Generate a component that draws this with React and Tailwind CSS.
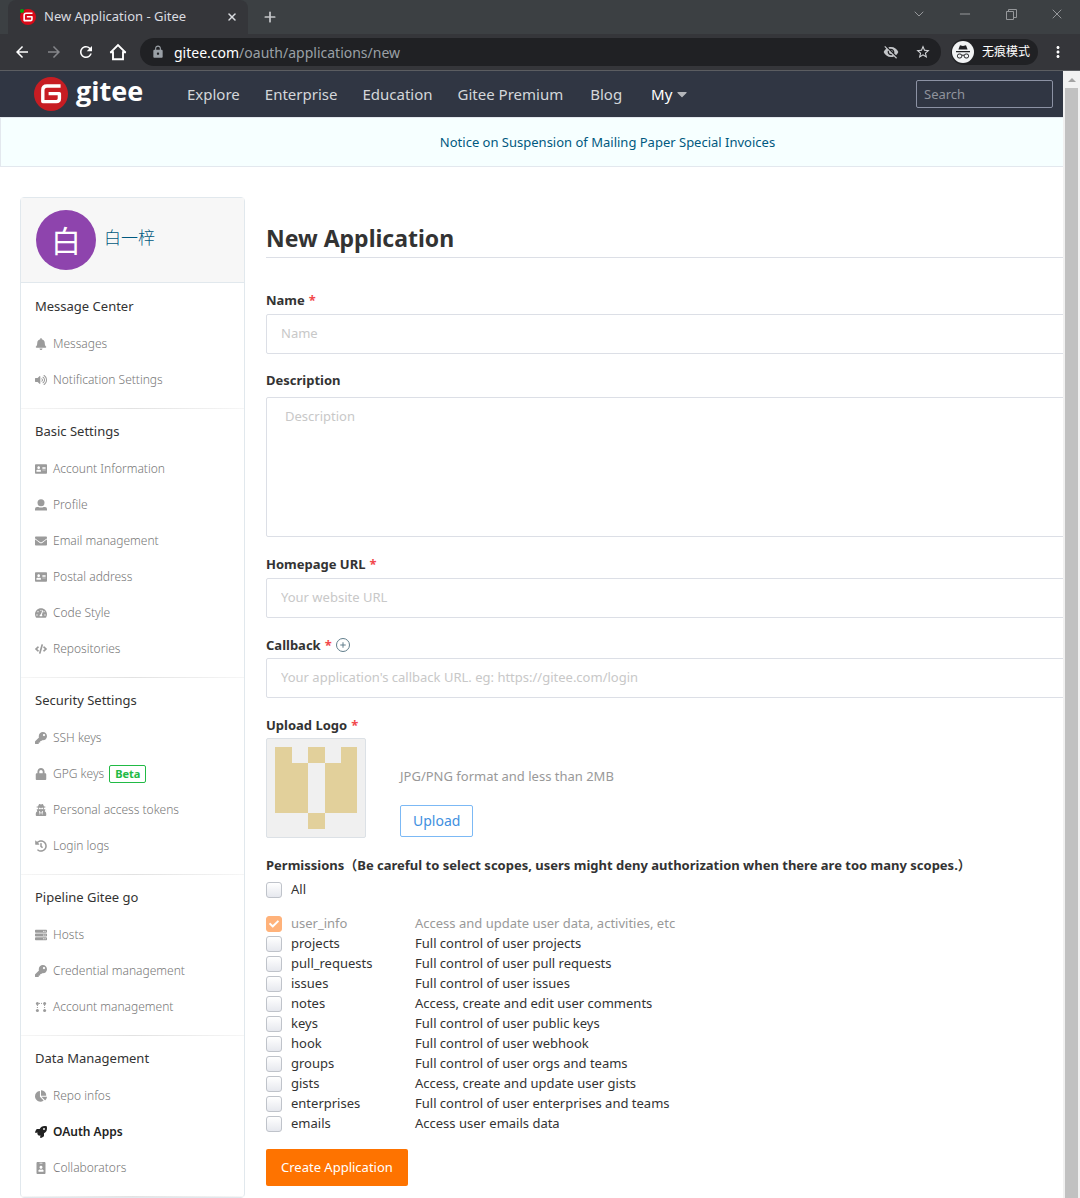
import React from "react";
import {
  FaBell, FaVolumeUp, FaAddressCard, FaUser, FaEnvelope, FaTachometerAlt, FaCode, FaKey, FaLock,
  FaUserSecret, FaHistory, FaServer, FaChartPie, FaRocket, FaIdBadge, FaCheck, FaCaretDown,
} from "react-icons/fa";
import { MdArrowBack, MdArrowForward, MdRefresh, MdLock, MdVisibilityOff, MdStarBorder, MdMoreVert } from "react-icons/md";
import { ChevronDown, Minus, X, Plus } from "lucide-react";

function GiteeMark({ className, color = "#c71d23" }) {
  return (
    <svg className={className} viewBox="0 0 34 34" aria-hidden="true">
      <circle cx="17" cy="17" r="17" fill={color} />
      <path
        d="M26.6 9H13Q8.8 9 8.8 13.2V24.6H22.4Q25.4 24.6 25.4 21.6V16.6H14.6"
        fill="none" stroke="#fff" strokeWidth="3.4" strokeLinejoin="round"
      />
    </svg>
  );
}

function HomeIcon({ className }) {
  return (
    <svg className={className} viewBox="0 0 18 18" fill="none" stroke="currentColor" strokeWidth="1.9" aria-hidden="true">
      <path d="M1.4 9.6 9 2l7.6 7.6M1 9.2h3v7h10v-7h3" />
    </svg>
  );
}

function IncognitoIcon({ className }) {
  return (
    <svg className={className} viewBox="0 0 22 22" fill="#202124" aria-hidden="true">
      <circle cx="11" cy="11" r="11" fill="#f1f3f4" />
      <path d="M8 4.2 11 5l3-.8 1.6 4.4H6.4zM4 10h14v1.2H4z" />
      <path d="M10 14.4q1-.8 2 0" fill="none" stroke="#202124" />
      <rect x="5.4" y="13" width="4.4" height="4" rx="1.8" fill="none" stroke="#202124" />
      <rect x="12.2" y="13" width="4.4" height="4" rx="1.8" fill="none" stroke="#202124" />
    </svg>
  );
}

function RestoreIcon({ className }) {
  return (
    <svg className={className} viewBox="0 0 11 11" fill="none" stroke="currentColor" aria-hidden="true">
      <path d="M.5 2.5h7v8h-7zM2.5 2.5v-2h8v8h-3" />
    </svg>
  );
}

function NodesIcon({ className }) {
  return (
    <svg className={className} viewBox="0 0 12 12" fill="currentColor" aria-hidden="true">
      <circle cx="2.4" cy="2.4" r="1.5" />
      <circle cx="9.6" cy="2.4" r="1.5" />
      <circle cx="2.4" cy="9.6" r="1.5" />
      <circle cx="9.6" cy="9.6" r="1.5" />
      <path d="M2.4 4v4M9.6 4v4M4 2.4h4" stroke="currentColor" strokeDasharray="1 1" />
    </svg>
  );
}

function PersonIcon({ className }) {
  return (
    <svg className={className} viewBox="0 0 12 12" fill="currentColor" aria-hidden="true">
      <circle cx="6" cy="3.8" r="3.5" />
      <path d="M0 11.6V10q0-2 2-2h1.2Q6 9 8.8 8H10q2 0 2 2v1.6z" />
    </svg>
  );
}

const navLinks = ["Explore", "Enterprise", "Education", "Gitee Premium"];

const windowControls = [
  { label: "Search tabs", icon: <ChevronDown className="size-4" strokeWidth={1.5} /> },
  { label: "Minimize", icon: <Minus className="size-4" strokeWidth={1.5} /> },
  { label: "Restore", icon: <RestoreIcon className="size-[11px]" /> },
  { label: "Close window", icon: <X className="size-4" strokeWidth={1.5} /> },
];

const sections = [
  { title: "Message Center", items: [
    { label: "Messages", Icon: FaBell },
    { label: "Notification Settings", Icon: FaVolumeUp },
  ] },
  { title: "Basic Settings", items: [
    { label: "Account Information", Icon: FaAddressCard },
    { label: "Profile", Icon: PersonIcon },
    { label: "Email management", Icon: FaEnvelope },
    { label: "Postal address", Icon: FaAddressCard },
    { label: "Code Style", Icon: FaTachometerAlt },
    { label: "Repositories", Icon: FaCode },
  ] },
  { title: "Security Settings", items: [
    { label: "SSH keys", Icon: FaKey },
    { label: "GPG keys", Icon: FaLock, beta: true },
    { label: "Personal access tokens", Icon: FaUserSecret },
    { label: "Login logs", Icon: FaHistory },
  ] },
  { title: "Pipeline Gitee go", items: [
    { label: "Hosts", Icon: FaServer },
    { label: "Credential management", Icon: FaKey },
    { label: "Account management", Icon: NodesIcon },
  ] },
  { title: "Data Management", items: [
    { label: "Repo infos", Icon: FaChartPie },
    { label: "OAuth Apps", Icon: FaRocket, active: true },
    { label: "Collaborators", Icon: FaIdBadge },
  ] },
];

const scopes = [
  ["user_info", "Access and update user data, activities, etc"],
  ["projects", "Full control of user projects"],
  ["pull_requests", "Full control of user pull requests"],
  ["issues", "Full control of user issues"],
  ["notes", "Access, create and edit user comments"],
  ["keys", "Full control of user public keys"],
  ["hook", "Full control of user webhook"],
  ["groups", "Full control of user orgs and teams"],
  ["gists", "Access, create and update user gists"],
  ["enterprises", "Full control of user enterprises and teams"],
  ["emails", "Access user emails data"],
];

function BrowserChrome() {
  return (
    <div className="shrink-0 bg-[#3c4043]">
      <div className="flex h-[34px] items-end justify-between">
        <div className="flex items-center pl-2">
          <div className="flex h-[34px] w-60 items-center rounded-t-lg bg-[#35363a] pr-2.5 pl-3">
            <span className="relative mr-2 flex">
              <GiteeMark className="size-4" color="#d80a18" />
              <span className="absolute top-0 left-0 size-1 rounded-full bg-[#0aa00a]" />
            </span>
            <span className="flex-1 text-[13px] text-[#dadce0]">New Application - Gitee</span>
            <button aria-label="Close tab" className="text-[#dadce0]"><X className="size-3" strokeWidth={3} /></button>
          </div>
          <button aria-label="New tab" className="ml-3.5 text-[#c4c6c9]"><Plus className="size-4" strokeWidth={2.6} /></button>
        </div>
        <div className="flex self-start text-[#96989b]">
          {windowControls.map(({ label, icon }) => (
            <button key={label} aria-label={label} className="flex h-7 w-[46px] items-center justify-center">{icon}</button>
          ))}
        </div>
      </div>
      <div className="flex h-[37px] items-center border-b border-[#5b5d61] bg-[#35363a] pl-[13px] text-white">
        <button aria-label="Back" className="mr-3.5"><MdArrowBack className="size-[18px]" /></button>
        <button aria-label="Forward" className="mr-3.5 text-[#85868a]"><MdArrowForward className="size-[18px]" /></button>
        <button aria-label="Reload" className="mr-3.5"><MdRefresh className="size-[18px]" /></button>
        <button aria-label="Home" className="mr-[13px]"><HomeIcon className="size-[18px]" /></button>
        <div className="flex h-7 flex-1 items-center rounded-full bg-[#202124] pr-2.5 pl-[11px]">
          <MdLock className="mr-[9px] size-3.5 text-[#9aa0a6]" />
          <p className="flex-1 text-[14px] text-[#9aa0a6]"><span className="text-white">gitee.com</span>/oauth/applications/new</p>
          <button aria-label="Third-party cookies blocked" className="mr-4 text-[#c4c6c9]"><MdVisibilityOff className="size-4" /></button>
          <button aria-label="Bookmark" className="text-[#d5d7da]"><MdStarBorder className="size-4" /></button>
        </div>
        <div className="mr-[11px] ml-2.5 flex h-[26px] items-center gap-2 rounded-full bg-[#202124] pr-2 pl-px">
          <IncognitoIcon className="size-[22px]" />
          <span className="text-[12px]">无痕模式</span>
        </div>
        <button aria-label="Menu" className="mr-[13px]"><MdMoreVert className="size-[18px]" /></button>
      </div>
    </div>
  );
}

function SiteHeader() {
  return (
    <header className="flex h-[46px] items-center bg-[#303643] pr-2.5 pl-[34px] text-[15px] text-[#d4d6da]">
      <a href="#" aria-label="Gitee" className="flex w-[153px] items-center gap-2">
        <GiteeMark className="size-[34px]" />
        <span className="pb-1.5 font-['Open_Sans',sans-serif] text-[27px] leading-8 font-bold text-white">gitee</span>
      </a>
      <nav className="flex flex-1 items-center gap-[25px]">
        {navLinks.map((label) => <a key={label} href="#">{label}</a>)}
        <a href="#" className="ml-0.5">Blog</a>
        <button className="ml-1 flex items-center gap-0.5 text-white">My<FaCaretDown className="h-4 w-auto text-[#b4b6ba]" /></button>
      </nav>
      <input
        aria-label="Search" placeholder="Search"
        className="h-7 w-[137px] rounded-xs border border-[#8c92a4] bg-transparent px-[7px] text-[13px] placeholder:text-[#8f939c]"
      />
    </header>
  );
}

function Sidebar() {
  return (
    <aside className="w-[225px] shrink-0 rounded-sm border border-[#e1e8ed]">
      <div className="mb-px flex h-[85px] items-center border-b border-[#e1e8ed] bg-[#f7f7f7] pl-[15px]">
        <span className="flex size-[60px] items-center justify-center rounded-full bg-[#8e44ad] text-[30px] text-white">白</span>
        <a href="#" className="ml-2 pb-1 text-[17px] font-light text-[#005980]">白一梓</a>
      </div>
      {sections.map(({ title, items }) => (
        <section key={title}>
          <h2 className="flex h-[42px] items-center pt-1 pl-3.5 text-[13px] text-[#333]">{title}</h2>
          <ul className="pb-2.5">
            {items.map(({ label, Icon, beta, active }) => (
              <li key={label}>
                <a href="#" className={active
                  ? "flex h-9 items-center pl-3 text-[12px] font-semibold text-[#222]"
                  : "flex h-9 items-center pl-3 text-[12px] font-light text-[#777]"}>
                  <span className={active ? "mr-[5px] flex w-[15px] justify-center" : "mr-[5px] flex w-[15px] justify-center text-[#9b9b9b]"}>
                    <Icon className="h-3 w-auto shrink-0" />
                  </span>
                  {label}
                  {beta && <span className="ml-[5px] rounded-xs border border-[#21ba45] px-[5px] text-[11px] leading-4 font-bold text-[#21ba45]">Beta</span>}
                </a>
              </li>
            ))}
          </ul>
          <div className="h-px bg-linear-to-r from-[#f6f6f6] via-[#e2e2e2] to-[#f6f6f6]" />
        </section>
      ))}
    </aside>
  );
}

function FieldLabel({ htmlFor, required, children }) {
  return (
    <label htmlFor={htmlFor} className="text-[13px] leading-5 font-bold">
      {children}{required && <span className="ml-1 text-[#f2494c]">*</span>}
    </label>
  );
}

function TickBox({ id, checked }) {
  return (
    <span className="relative flex size-4 shrink-0">
      <input
        id={id} type="checkbox" defaultChecked={checked} disabled={checked}
        className="size-4 appearance-none rounded-[3px] border border-[#bfc3ca] bg-linear-to-b from-white to-[#e6e8ee] checked:border-[#ffb27a] checked:bg-[#ffb27a] checked:bg-none"
      />
      {checked && <FaCheck className="pointer-events-none absolute top-[3px] left-[3px] size-2.5 text-white" />}
    </span>
  );
}

const inputClass = "mt-[3px] block h-10 w-full rounded-xs border border-[#dcdfe6] px-3.5 pb-0.5 text-[13px] placeholder:text-[#c8c8c8]";

function ApplicationForm() {
  return (
    <form className="min-w-0 flex-1 pt-[26px] text-[13px] text-[#333]" onSubmit={(e) => e.preventDefault()}>
      <h1 className="mb-8 border-b border-[#dcdfe6] pb-1 text-[23px] leading-[30px] font-bold">New Application</h1>

      <div className="mb-4">
        <FieldLabel htmlFor="name" required>Name</FieldLabel>
        <input id="name" placeholder="Name" className={inputClass} />
      </div>
      <div className="mb-[17px]">
        <FieldLabel htmlFor="description">Description</FieldLabel>
        <textarea id="description" placeholder="Description" className="mt-[7px] block h-[140px] w-full resize-none rounded-xs border border-[#dcdfe6] px-[18px] py-2 text-[13px] leading-5 placeholder:text-[#c8c8c8]" />
      </div>
      <div className="mb-[17px]">
        <FieldLabel htmlFor="homepage" required>Homepage URL</FieldLabel>
        <input id="homepage" placeholder="Your website URL" className={inputClass} />
      </div>
      <div className="mb-[17px]">
        <div className="flex items-center">
          <FieldLabel htmlFor="callback" required>Callback</FieldLabel>
          <button type="button" aria-label="Add callback" className="ml-1 flex size-3.5 items-center justify-center rounded-full border border-[#607d8b] text-[#607d8b]">
            <Plus className="size-2" strokeWidth={3} />
          </button>
        </div>
        <input id="callback" placeholder="Your application's callback URL. eg: https://gitee.com/login" className={inputClass} />
      </div>

      <div className="mb-[17px]">
        <FieldLabel htmlFor="upload" required>Upload Logo</FieldLabel>
        <div className="mt-[3px] flex">
          <svg className="size-[100px] rounded-xs border border-[#dce1e6] bg-[#f0f0f0]" viewBox="0 0 98 98" fill="#e2d09b" role="img" aria-label="Application logo">
            <path d="M8 8h17v16h16v50H8zM41 8h17v16H41zM90 8H74v16H58v50h32zM41 74h17v16H41z" />
          </svg>
          <div className="ml-[34px] pt-7">
            <p className="leading-5 text-[#999]">JPG/PNG format and less than 2MB</p>
            <button id="upload" type="button" className="mt-[19px] h-8 rounded-xs border border-[#7cb9f5] px-3 pb-0.5 text-[14px] text-[#4190e0]">Upload</button>
          </div>
        </div>
      </div>

      <fieldset>
        <legend className="leading-5 font-bold whitespace-nowrap">Permissions（Be careful to select scopes, users might deny authorization when there are too many scopes.）</legend>
        <label htmlFor="scope-all" className="mt-[5px] mb-3.5 flex h-5 items-center gap-[9px]"><TickBox id="scope-all" />All</label>
        {scopes.map(([name, text], i) => (
          <div key={name} className={i === 0 ? "flex h-5 items-center text-[#999]" : "flex h-5 items-center"}>
            <label htmlFor={"scope-" + name} className="flex w-[149px] items-center gap-[9px]">
              <TickBox id={"scope-" + name} checked={i === 0} />{name}
            </label>
            <span>{text}</span>
          </div>
        ))}
      </fieldset>
      <button type="submit" className="mt-[15px] h-[37px] rounded-xs bg-[#fe7300] px-[15px] text-[13px] text-white">Create Application</button>
    </form>
  );
}

function Scrollbar() {
  return (
    <div className="flex w-[17px] shrink-0 flex-col items-center bg-[#f1f1f1]" aria-hidden="true">
      <svg className="h-[17px] w-2.5" viewBox="0 0 10 17" fill="#a3a3a3"><path d="M1 11 5 7l4 4z" /></svg>
      <div className="w-[13px] flex-1 bg-[#c1c1c1]" />
    </div>
  );
}

export default function App() {
  return (
    <div className="flex h-screen flex-col overflow-hidden bg-white font-['Noto_Sans','Noto_Sans_CJK_SC',sans-serif]">
      <BrowserChrome />
      <div className="flex min-h-0 flex-1">
        <div className="min-w-0 flex-1 overflow-hidden">
          <SiteHeader />
          <div className="min-w-[1215px]">
            <div className="flex h-[50px] items-center justify-center border border-[#e3e8ee] bg-[#f6ffff] pt-0.5">
              <a href="#" className="text-[13px] text-[#005980]">Notice on Suspension of Mailing Paper Special Invoices</a>
            </div>
            <div className="flex items-start gap-[21px] px-5 pt-[30px]">
              <Sidebar />
              <ApplicationForm />
            </div>
          </div>
        </div>
        <Scrollbar />
      </div>
    </div>
  );
}
